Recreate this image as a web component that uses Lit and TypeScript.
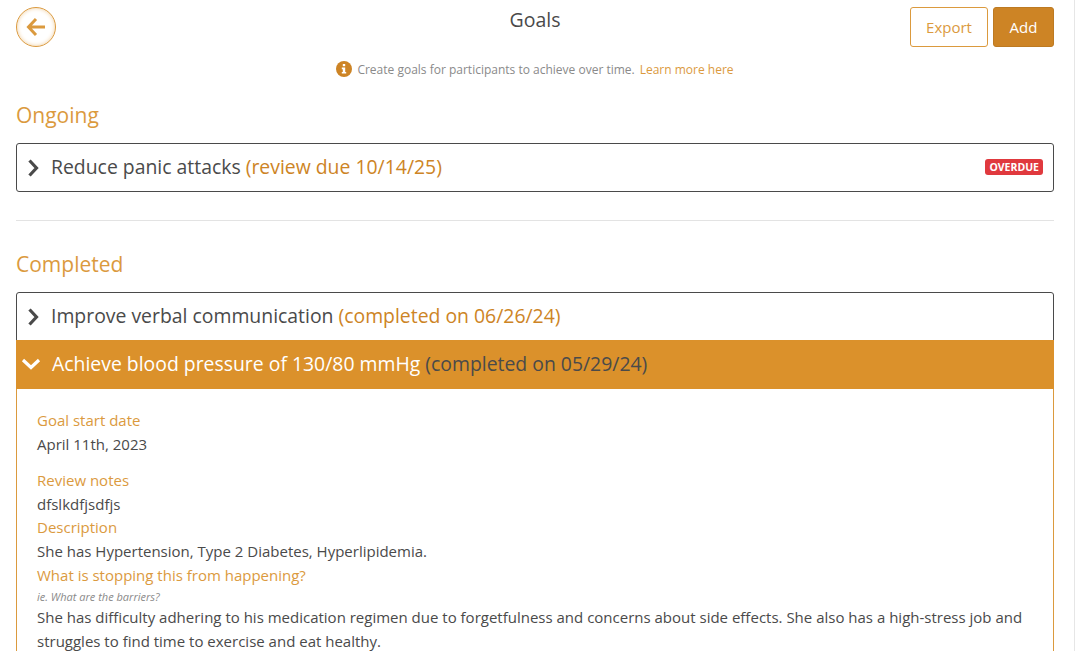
import { LitElement, html, css } from "lit";
import { customElement } from "lit/decorators.js";

const chevronRight = html`<svg class="chev" width="16" height="18" viewBox="0 0 16 18"><path d="M4.5 1.5 L11.5 9 L4.5 16.5" fill="none" stroke="currentColor" stroke-width="3.2"/></svg>`;
const chevronDown = html`<svg class="chev down" width="20" height="14" viewBox="0 0 20 14"><path d="M2 3 L10 10.5 L18 3" fill="none" stroke="currentColor" stroke-width="3.2"/></svg>`;

@customElement("app-root")
export class AppRoot extends LitElement {
  static styles = css`
    :host {
      display: block;
      height: 651px;
      overflow: hidden;
      background: #fff;
      font-family: "Open Sans", "Lato", sans-serif;
      color: #4a4a4a;
    }
    .page {
      height: 651px;
      box-sizing: border-box;
      padding: 7px 20px 0 16px;
      border-right: 1px solid #e6e6e6;
    }
    .top {
      display: grid;
      grid-template-columns: 1fr auto 1fr;
      align-items: start;
    }
    .back {
      width: 40px;
      height: 40px;
      box-sizing: border-box;
      border: 1px solid #db9a3e;
      border-radius: 50%;
      box-shadow: inset 0 0 4px #f0cfa0;
      display: flex;
      align-items: center;
      justify-content: center;
      color: #db9a3e;
    }
    .title {
      font-size: 19.5px;
      line-height: 26px;
      text-align: center;
    }
    .actions {
      display: flex;
      justify-content: flex-end;
      gap: 5px;
    }
    .btn {
      height: 40px;
      box-sizing: border-box;
      border-radius: 3px;
      font-size: 15px;
      display: flex;
      align-items: center;
      justify-content: center;
    }
    .export {
      width: 78px;
      border: 1px solid #db9a3e;
      color: #db9a3e;
    }
    .add {
      width: 61px;
      background: #cd8425;
      border: 1px solid #bd7a22;
      color: #fff;
    }
    .hint {
      display: flex;
      justify-content: center;
      align-items: center;
      gap: 5px;
      font-size: 12px;
      color: #8a8a8a;
      margin-top: 12px;
      height: 20px;
    }
    .hint a {
      color: #db9a3e;
    }
    h2 {
      font-size: 21px;
      font-weight: 400;
      color: #db9a3e;
      margin: 0;
      line-height: 28px;
    }
    .ongoing {
      margin-top: 22px;
    }
    .box {
      border: 1px solid #4a4a4a;
      border-radius: 3px;
      margin-top: 14px;
    }
    .row {
      display: flex;
      align-items: center;
      height: 47px;
      box-sizing: border-box;
      padding: 0 0 2px 8px;
      font-size: 19.4px;
      line-height: 26px;
    }
    .chev {
      margin-right: 10px;
      margin-top: 2px;
      flex: none;
    }
    .down {
      margin-right: 11px;
      margin-left: -3px;
      margin-top: 0;
    }
    .row span {
      margin-left: 5px;
      color: #cd8425;
    }
    .badge {
      margin-left: auto;
      margin-right: 10px;
      background: #e0393e;
      color: #fff;
      font-size: 10.5px;
      font-weight: 700;
      line-height: 16px;
      padding: 0 4px;
      border-radius: 3px;
    }
    hr {
      border: none;
      border-top: 1px solid #e3e3e3;
      margin: 28px 0 29px;
    }
    .open {
      background: #db912b;
      color: #fff;
      height: 49px;
      margin: 0 -1px;
    }
    .open span {
      color: #4a4a4a;
    }
    .detail {
      border-left: 1px solid #db9a3e;
      border-right: 1px solid #db9a3e;
      margin: 0 -1px;
      padding: 20px 20px 0;
      font-size: 15px;
      line-height: 23.7px;
    }
    .label {
      color: #db9a3e;
    }
    .gap {
      margin-top: 12.5px;
    }
    .note {
      font-size: 11px;
      font-style: italic;
      color: #8a8a8a;
      line-height: 19px;
    }
  `;

  render() {
    return html`<div class="page">
      <div class="top">
        <div class="back">
          <svg width="20" height="20" viewBox="0 0 20 20"><path d="M10 2 L2.5 10 L10 18 M3 10 H19" fill="none" stroke="currentColor" stroke-width="3"/></svg>
        </div>
        <div class="title">Goals</div>
        <div class="actions">
          <div class="btn export">Export</div>
          <div class="btn add">Add</div>
        </div>
      </div>
      <div class="hint">
        <svg width="16" height="16" viewBox="0 0 16 16"><circle cx="8" cy="8" r="8" fill="#cd8425"/><rect x="6.8" y="3" width="2.4" height="2.2" fill="#fff"/><path d="M5.8 6.6 H9.2 V11 H10.2 V12.6 H5.8 V11 H6.8 V8.2 H5.8 Z" fill="#fff"/></svg>
        Create goals for participants to achieve over time.
        <a>Learn more here</a>
      </div>
      <h2 class="ongoing">Ongoing</h2>
      <div class="box">
        <div class="row">
          ${chevronRight}Reduce panic attacks <span>(review due 10/14/25)</span>
          <div class="badge">OVERDUE</div>
        </div>
      </div>
      <hr />
      <h2>Completed</h2>
      <div class="box">
        <div class="row">${chevronRight}Improve verbal communication <span>(completed on 06/26/24)</span></div>
        <div class="row open">${chevronDown}Achieve blood pressure of 130/80 mmHg <span>(completed on 05/29/24)</span></div>
        <div class="detail">
          <div class="label">Goal start date</div>
          <div>April 11th, 2023</div>
          <div class="label gap">Review notes</div>
          <div>dfslkdfjsdfjs</div>
          <div class="label">Description</div>
          <div>She has Hypertension, Type 2 Diabetes, Hyperlipidemia.</div>
          <div class="label">What is stopping this from happening?</div>
          <div class="note">ie. What are the barriers?</div>
          <div>She has difficulty adhering to his medication regimen due to forgetfulness and concerns about side effects. She also has a high-stress job and struggles to find time to exercise and eat healthy.</div>
        </div>
      </div>
    </div>`;
  }
}
